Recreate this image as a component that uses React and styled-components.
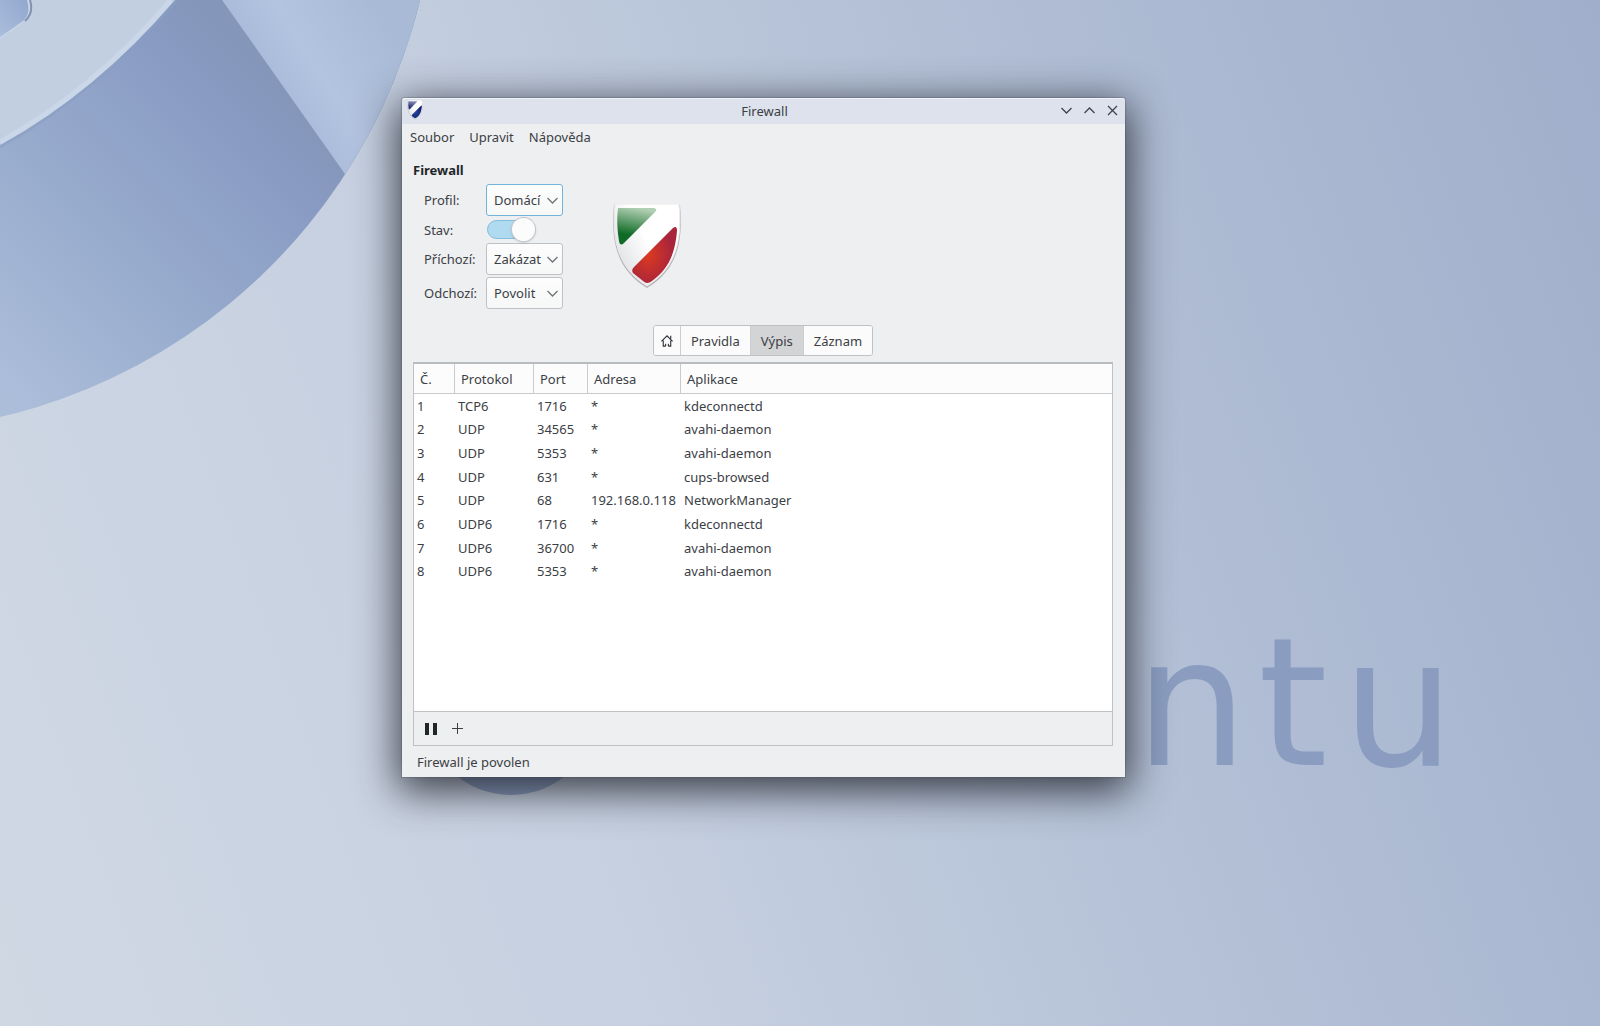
import { useState } from 'react';
import styled, { createGlobalStyle } from 'styled-components';

const GlobalStyle = createGlobalStyle`
  * {
    box-sizing: border-box;
  }
  body {
    margin: 0;
    font-family: "Noto Sans", sans-serif;
    font-size: 13px;
    line-height: 20px;
    color: #3b4045;
  }
  button, select {
    font: inherit;
    color: inherit;
  }
`;

const Desktop = styled.div`
  position: relative;
  min-height: 100vh;
  overflow: hidden;
  background: linear-gradient(70deg, #d0d8e4 0%, #c6d0e0 34%, #b3c0d6 64%, #a0aecb 100%);
`;

const Backdrop = styled.svg`
  position: absolute;
  inset: 0;
  width: 100%;
  height: 100%;
`;

const Wordmark = styled.text`
  font-family: "DejaVu Sans", sans-serif;
  font-size: 178px;
  fill: #8a9dc1;
`;

const Window = styled.main`
  position: absolute;
  top: 98px;
  left: 402px;
  width: 723px;
  background: #eeeff1;
  border-radius: 3px 3px 0 0;
  box-shadow: 0 0 1px 1px rgba(70, 75, 90, 0.3), 0 10px 40px 4px rgba(32, 34, 42, 0.85);
`;

const TitleBar = styled.header`
  display: grid;
  grid-template-columns: 80px 1fr 80px;
  align-items: center;
  height: 26px;
  padding: 0 3px 2px 5px;
  background: #dde2ed;
  border-top: 1px solid #eff2f8;
  border-radius: 3px 3px 0 0;
`;

const Title = styled.div`
  text-align: center;
`;

const WindowButtons = styled.div`
  display: flex;
  justify-content: flex-end;
  gap: 3px;
`;

const IconButton = styled.button`
  display: flex;
  align-items: center;
  justify-content: center;
  width: 20px;
  height: 20px;
  padding: 0;
  border: none;
  background: none;
`;

const MenuBar = styled.nav`
  display: flex;
  gap: 15px;
  height: 26px;
  padding: 3px 8px;
`;

const MenuItem = styled.button`
  padding: 0;
  border: none;
  background: none;
`;

const Content = styled.div`
  display: flex;
  flex-direction: column;
  padding: 10px 12px 0 11px;
`;

const Heading = styled.h1`
  margin: 0 0 4px;
  font-size: 13px;
  line-height: 20px;
  color: #232629;
`;

const Settings = styled.div`
  display: flex;
  align-items: center;
  gap: 49px;
  padding-left: 11px;
`;

const Form = styled.div`
  display: grid;
  grid-template-columns: 62px 77px;
  row-gap: 2px;
  align-items: center;
`;

const SelectBox = styled.div`
  display: grid;
  grid-template-columns: 1fr 17px;
  align-items: center;

  svg {
    grid-area: 1 / 2;
    pointer-events: none;
  }
`;

const Select = styled.select`
  grid-area: 1 / 1 / 2 / 3;
  width: 100%;
  height: 32px;
  padding: 0 7px;
  appearance: none;
  outline: none;
  border: 1px solid ${(props) => (props.$active ? '#6fb5dc' : '#bfc1c4')};
  border-radius: 3px;
  background: linear-gradient(#fdfdfd, #f6f7f7);
`;

const Toggle = styled.input`
  position: relative;
  width: 48px;
  height: 19px;
  margin: 2px 0 2px 1px;
  appearance: none;
  border: 1px solid #85bddb;
  border-radius: 10px;
  background: #b0daef;

  &::before {
    content: "";
    position: absolute;
    top: -3px;
    right: -1px;
    width: 23px;
    height: 23px;
    border-radius: 50%;
    background: #fcfcfc;
    box-shadow: 0 0 0 1px #c4c7ca, 0 1px 2px 1px rgba(0, 0, 0, 0.12);
  }

  &:not(:checked)::before {
    right: auto;
    left: -1px;
  }
`;

const Tabs = styled.div`
  display: flex;
  align-self: center;
  margin: 16px 0 6px;
  border: 1px solid #bfc1c4;
  border-radius: 3px;
  overflow: hidden;
`;

const Tab = styled.button`
  display: flex;
  align-items: center;
  height: 29px;
  padding: 0 ${(props) => (props.$narrow ? 6 : 10)}px;
  border: none;
  border-right: 1px solid #cbcdcf;
  background: ${(props) => (props.$active ? '#d3d4d5' : '#fbfbfb')};

  &:last-child {
    border-right: none;
  }
`;

const Panel = styled.section`
  border: 1px solid #bfc1c4;
  border-top: 2px solid #b9bbbd;
`;

const List = styled.div`
  min-height: 348px;
  background: #fff;
  border-bottom: 1px solid #bfc1c4;
`;

const Table = styled.table`
  width: 100%;
  table-layout: fixed;
  border-collapse: separate;
  border-spacing: 0;
`;

const TableBody = styled.tbody`
  height: 189px;
`;

const HeadCell = styled.th`
  height: 30px;
  padding: 0 6px;
  font-weight: normal;
  text-align: left;
  background: #fcfcfc;
  border-bottom: 1px solid #c9cbcd;
  border-right: 1px solid #c9cbcd;

  &:last-child {
    border-right: none;
  }
`;

const Cell = styled.td`
  padding: 0 3px;
  white-space: nowrap;
`;

const ListToolbar = styled.div`
  display: flex;
  align-items: center;
  gap: 6px;
  height: 33px;
  padding: 0 7px;
`;

const StatusBar = styled.footer`
  padding: 6px 15px 5px;
`;

const columns = [
  { title: 'Č.', width: 41 },
  { title: 'Protokol', width: 79 },
  { title: 'Port', width: 54 },
  { title: 'Adresa', width: 93 },
  { title: 'Aplikace' },
];

const connections = [
  ['TCP6', '1716', '*', 'kdeconnectd'],
  ['UDP', '34565', '*', 'avahi-daemon'],
  ['UDP', '5353', '*', 'avahi-daemon'],
  ['UDP', '631', '*', 'cups-browsed'],
  ['UDP', '68', '192.168.0.118', 'NetworkManager'],
  ['UDP6', '1716', '*', 'kdeconnectd'],
  ['UDP6', '36700', '*', 'avahi-daemon'],
  ['UDP6', '5353', '*', 'avahi-daemon'],
];

function Wallpaper() {
  return (
    <Backdrop viewBox="0 0 1600 1026" preserveAspectRatio="xMinYMin slice" aria-hidden="true">
      <defs>
        <linearGradient id="disc" gradientUnits="userSpaceOnUse" x1="10" y1="390" x2="300" y2="110">
          <stop offset="0" stopColor="#abbdd9" />
          <stop offset="0.45" stopColor="#97abcd" />
          <stop offset="0.85" stopColor="#899bc3" />
          <stop offset="1" stopColor="#8496b9" />
        </linearGradient>
        <linearGradient id="beam" gradientUnits="userSpaceOnUse" x1="270" y1="80" x2="380" y2="10">
          <stop offset="0" stopColor="#a9bbd9" />
          <stop offset="0.35" stopColor="#b3c4e0" />
          <stop offset="1" stopColor="#a9bad6" />
        </linearGradient>
        <linearGradient id="tooth" x1="0" y1="1" x2="1" y2="0">
          <stop offset="0" stopColor="#aabddc" />
          <stop offset="1" stopColor="#92a8ce" />
        </linearGradient>
      </defs>
      <circle cx="-129" cy="-133" r="565" fill="url(#disc)" />
      <path d="M222 0 L345 174 A565 565 0 0 0 420 0 Z" fill="url(#beam)" />
      <path d="M0 147 Q97 93 177 0" fill="none" stroke="#8a9fc3" strokeWidth="3" opacity="0.6" />
      <path d="M0 145 Q96 92 175 0 H0 Z" fill="#c2cfe1" />
      <path d="M0 142 Q94 90 171 0" fill="none" stroke="#cad7e9" strokeWidth="5" />
      <path d="M0 39 L25 21 Q34 13 30 0 H0 Z" fill="#c9d5e6" />
      <path d="M0 37 L23 21 Q31 15 27 0 H0 Z" fill="url(#tooth)" />
      <path d="M25 21 Q34 13 30 0" fill="none" stroke="#8192ad" strokeWidth="2" />
      <circle cx="511" cy="708" r="87" fill="#8a9dc1" />
      <Wordmark x="1135 1258 1342" y="765">ntu</Wordmark>
    </Backdrop>
  );
}

function Shield({ id, width, top, topDark, bottom, bottomDark }) {
  return (
    <svg width={width} viewBox="0 0 70 88" aria-hidden="true">
      <defs>
        <linearGradient id={id + 'top'} x1="0.5" y1="0" x2="0.3" y2="1">
          <stop offset="0" stopColor={top} />
          <stop offset="0.75" stopColor={topDark} />
        </linearGradient>
        <radialGradient id={id + 'bottom'} cx="0.35" cy="0.5" r="0.55">
          <stop offset="0" stopColor={bottom} />
          <stop offset="1" stopColor={bottomDark} />
        </radialGradient>
        <linearGradient id={id + 'body'} x1="0" y1="0.7" x2="0.8" y2="0.2">
          <stop offset="0" stopColor="#dedfe2" />
          <stop offset="0.6" stopColor="#ffffff" />
        </linearGradient>
      </defs>
      <path d="M2 2 H68 C71 35 67 66 35 85 C3 66 -1 35 2 2 Z" fill="#75777a" opacity="0.5" />
      <path
        d="M3 1 H67 C70 34 66 64 35 83 C4 64 0 34 3 1 Z"
        fill={`url(#${id}body)`}
        stroke="#efe9ea"
        strokeWidth="1"
      />
      <path d="M6 5 H42 Q46 6 43 9 L12 40 Q8 44 7 38 Q4 20 6 5 Z" fill={`url(#${id}top)`} />
      <path
        d="M61 25 Q65 22 65 28 C63 53 55 67 40 78 Q35 82 31 78 L21 70 Q19 67 22 64 Z"
        fill={`url(#${id}bottom)`}
      />
    </svg>
  );
}

function Chevron({ up, color = '#6f7377' }) {
  return (
    <svg width="13" height="13" viewBox="0 0 13 13" fill="none" stroke={color} aria-hidden="true">
      <path d={up ? 'M1.500 9 L6.500 4 L11.500 9' : 'M1.500 4 L6.500 9 L11.500 4'} strokeWidth="1.300" />
    </svg>
  );
}

function Field({ id, label, options, active }) {
  return (
    <>
      <label htmlFor={id}>{label}</label>
      <SelectBox>
        <Select id={id} $active={active}>
          {options.map((option) => (
            <option key={option}>{option}</option>
          ))}
        </Select>
        <Chevron />
      </SelectBox>
    </>
  );
}

function App() {
  const [enabled, setEnabled] = useState(true);
  const [tab, setTab] = useState('Výpis');

  return (
    <>
      <GlobalStyle />
      <Desktop>
        <Wallpaper />
        <Window>
          <TitleBar>
            <Shield
              id="small"
              width="16"
              top="#8c90b8"
              topDark="#2a3475"
              bottom="#2745a8"
              bottomDark="#14246e"
            />
            <Title>Firewall</Title>
            <WindowButtons>
              <IconButton aria-label="Minimalizovat"><Chevron color="#40454b" /></IconButton>
              <IconButton aria-label="Maximalizovat"><Chevron up color="#40454b" /></IconButton>
              <IconButton aria-label="Zavřít">
                <svg width="13" height="13" viewBox="0 0 13 13" stroke="#40454b" strokeWidth="1.300">
                  <path d="M2 2 L11 11 M11 2 L2 11" />
                </svg>
              </IconButton>
            </WindowButtons>
          </TitleBar>
          <MenuBar>
            <MenuItem>Soubor</MenuItem>
            <MenuItem>Upravit</MenuItem>
            <MenuItem>Nápověda</MenuItem>
          </MenuBar>
          <Content>
            <Heading>Firewall</Heading>
            <Settings>
              <Form>
                <Field id="profile" label="Profil:" options={['Domácí']} active />
                <label htmlFor="status">Stav:</label>
                <Toggle
                  id="status"
                  type="checkbox"
                  checked={enabled}
                  onChange={(event) => setEnabled(event.target.checked)}
                />
                <Field id="incoming" label="Příchozí:" options={['Zakázat', 'Povolit']} />
                <Field id="outgoing" label="Odchozí:" options={['Povolit', 'Zakázat']} />
              </Form>
              <Shield
                id="large"
                width="70"
                top="#b2d0b4"
                topDark="#0f6a26"
                bottom="#dc3a20"
                bottomDark="#a9253c"
              />
            </Settings>
            <Tabs>
              <Tab $narrow aria-label="Domů" onClick={() => setTab('')}>
                <svg width="14" height="14" viewBox="0 0 15 15" fill="none" stroke="#2f3337" strokeWidth="1.200">
                  <path d="M1.500 8 L7.500 2 L13.500 8 M11.500 2 V5 M3.500 7 V13 H6 M9 13 H11.500 V7 M6 13 V10.500 M9 13 V10.500" />
                </svg>
              </Tab>
              {['Pravidla', 'Výpis', 'Záznam'].map((name) => (
                <Tab key={name} $active={tab === name} onClick={() => setTab(name)}>
                  {name}
                </Tab>
              ))}
            </Tabs>
            <Panel>
              <List>
                <Table>
                  <colgroup>
                    {columns.map((column) => (
                      <col key={column.title} width={column.width} />
                    ))}
                  </colgroup>
                  <thead>
                    <tr>
                      {columns.map((column) => (
                        <HeadCell key={column.title}>{column.title}</HeadCell>
                      ))}
                    </tr>
                  </thead>
                  <TableBody>
                    {connections.map((row, index) => (
                      <tr key={index}>
                        <Cell>{index + 1}</Cell>
                        {row.map((value, column) => (
                          <Cell key={column}>{value}</Cell>
                        ))}
                      </tr>
                    ))}
                  </TableBody>
                </Table>
              </List>
              <ListToolbar>
                <IconButton aria-label="Pozastavit">
                  <svg width="12" height="12" viewBox="0 0 12 12" fill="#232629">
                    <path d="M0 0 H4 V12 H0 Z M8 0 H12 V12 H8 Z" />
                  </svg>
                </IconButton>
                <IconButton aria-label="Přidat">
                  <svg width="11" height="11" viewBox="0 0 11 11" stroke="#3b4045">
                    <path d="M5.500 0 V11 M0 5.500 H11" />
                  </svg>
                </IconButton>
              </ListToolbar>
            </Panel>
          </Content>
          <StatusBar>Firewall je povolen</StatusBar>
        </Window>
      </Desktop>
    </>
  );
}

export default App;
